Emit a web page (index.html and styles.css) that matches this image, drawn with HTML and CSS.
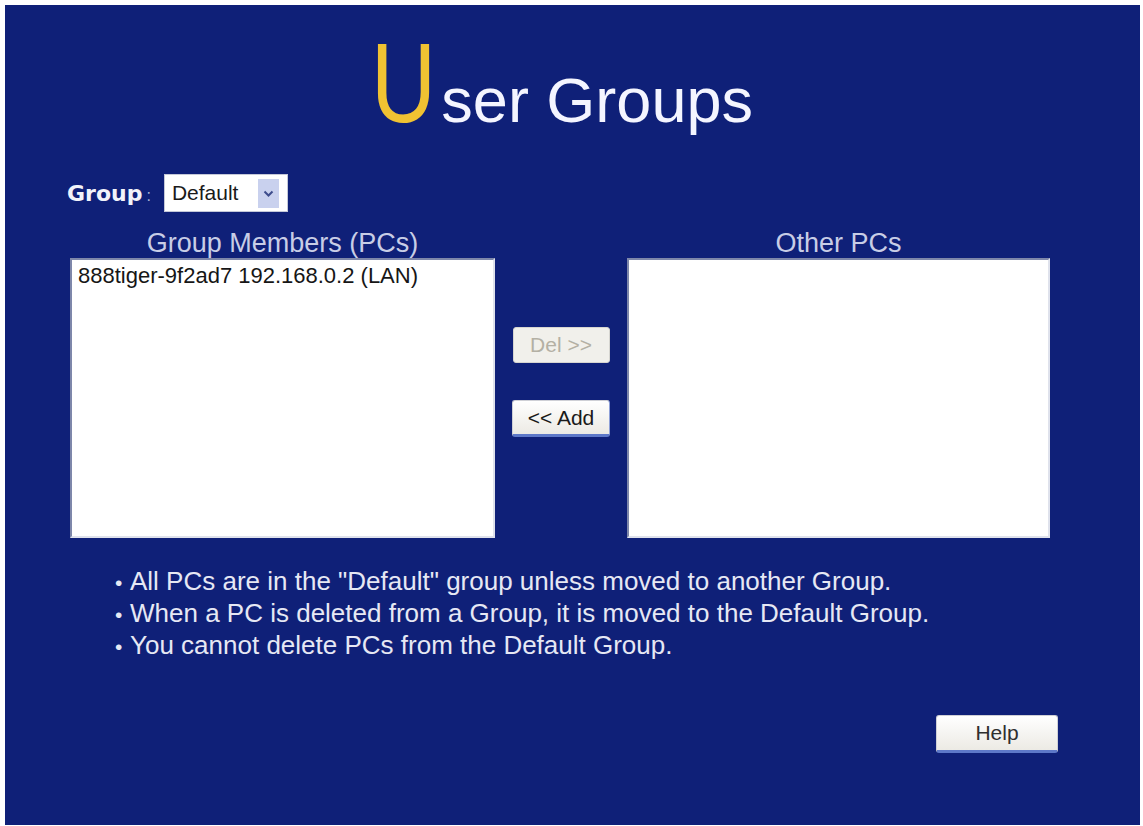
FILE: index.html
```html
<!DOCTYPE html>
<html>
<head>
<meta charset="utf-8">
<title>User Groups</title>
<link rel="stylesheet" href="styles.css">
</head>
<body>
<div class="panel">
  <h1 class="title"><span class="title-big">U</span><span class="title-rest">ser Groups</span></h1>

  <div class="group-row">
    <span class="group-label">Group</span><span class="group-colon">:</span>
    <div class="select">
      <span class="select-text">Default</span>
      <span class="select-arrow">
        <svg width="11" height="7" viewBox="0 0 11 7"><path d="M1.5 1.5 L5.5 5.5 L9.5 1.5" fill="none" stroke="#3d4c8c" stroke-width="2"/></svg>
      </span>
    </div>
  </div>

  <div class="lists">
    <div class="col">
      <div class="col-label">Group Members (PCs)</div>
      <div class="listbox">
        <div class="item">888tiger-9f2ad7 192.168.0.2 (LAN)</div>
      </div>
    </div>
    <div class="mid">
      <button class="btn btn-del" disabled>Del &gt;&gt;</button>
      <button class="btn btn-add">&lt;&lt; Add</button>
    </div>
    <div class="col">
      <div class="col-label">Other PCs</div>
      <div class="listbox"></div>
    </div>
  </div>

  <ul class="notes">
    <li>All PCs are in the "Default" group unless moved to another Group.</li>
    <li>When a PC is deleted from a Group, it is moved to the Default Group.</li>
    <li>You cannot delete PCs from the Default Group.</li>
  </ul>

  <div class="help-row">
    <button class="btn btn-help">Help</button>
  </div>
</div>
</body>
</html>
```

FILE: styles.css
```css
html, body {
  margin: 0;
  padding: 0;
  background: #ffffff;
}

body {
  font-family: "Liberation Sans", Arial, sans-serif;
}

.panel {
  margin: 5px 0 0 5px;
  width: 1135px;
  height: 820px;
  box-sizing: border-box;
  background: #0f2078;
  padding-top: 21px;
}

.title {
  margin: 0;
  padding-right: 21px;
  display: flex;
  justify-content: center;
  align-items: baseline;
  font-weight: normal;
  font-family: "Liberation Sans", Arial, sans-serif;
}

.title-big {
  display: inline-block;
  font-size: 114px;
  line-height: 1;
  color: #f0c232;
  transform: scaleX(0.79);
  transform-origin: left center;
  margin-right: -12px;
}

.title-rest {
  font-size: 63px;
  line-height: 1;
  color: #f4f5ff;
}

.group-row {
  margin-top: 34px;
  padding-left: 62px;
  display: flex;
  align-items: center;
  height: 38px;
}

.group-label {
  font-family: "DejaVu Sans", Verdana, sans-serif;
  font-weight: bold;
  font-size: 22px;
  color: #f2f3fa;
}

.group-colon {
  font-size: 16px;
  color: #aab2d4;
  margin: 6px 13px 0 4px;
}

.select {
  width: 124px;
  height: 38px;
  box-sizing: border-box;
  background: #ffffff;
  border: 1px solid #c4c8d8;
  display: flex;
  align-items: center;
  padding: 0 8px 0 7px;
}

.select-text {
  flex: 1;
  font-size: 21px;
  color: #1a1a1a;
}

.select-arrow {
  width: 21px;
  height: 29px;
  background: #c9d1ee;
  display: flex;
  align-items: center;
  justify-content: center;
}

.lists {
  margin-top: 17px;
  padding-left: 65px;
  display: grid;
  grid-template-columns: 425px 132px 423px;
}

.col {
  display: flex;
  flex-direction: column;
}

.col-label {
  height: 28px;
  line-height: 28px;
  margin-bottom: 1px;
  text-align: center;
  font-size: 27px;
  color: #c8cde6;
}

.listbox {
  height: 280px;
  box-sizing: border-box;
  background: #ffffff;
  border: 2px solid;
  border-color: #7e87aa #dfe2ec #dfe2ec #7e87aa;
  padding: 4px 6px;
}

.item {
  font-size: 22px;
  line-height: 24px;
  color: #161616;
  white-space: nowrap;
}

.mid {
  display: flex;
  flex-direction: column;
  align-items: center;
  padding-top: 98px;
  gap: 37px;
}

.btn {
  font-family: "Liberation Sans", Arial, sans-serif;
  font-size: 21px;
  padding: 0;
  box-sizing: border-box;
  border: 1px solid #cfd0d6;
  border-radius: 3px;
  background: linear-gradient(#ffffff, #eceae4);
  color: #1a1a1a;
}

.btn-del {
  width: 97px;
  height: 36px;
  color: #b4b0a4;
  background: #f1f0eb;
  border-color: #d6d5d0;
}

.btn-add {
  width: 98px;
  height: 37px;
  border-bottom: 3px solid #5d78c8;
  border-right-color: #8ea0d8;
}

.notes {
  list-style: none;
  margin: 27px 0 0;
  padding: 0 0 0 110px;
  font-size: 26px;
  line-height: 32px;
  color: #e6e8f4;
}

.notes li {
  display: flex;
  align-items: baseline;
}

.notes li::before {
  content: "\2022";
  font-size: 21px;
  line-height: 1;
  width: 15px;
  flex: none;
}

.help-row {
  margin-top: 54px;
  padding-right: 82px;
  display: flex;
  justify-content: flex-end;
}

.btn-help {
  width: 122px;
  height: 38px;
  color: #2f2f2f;
  border-bottom: 3px solid #5d78c8;
}
```
